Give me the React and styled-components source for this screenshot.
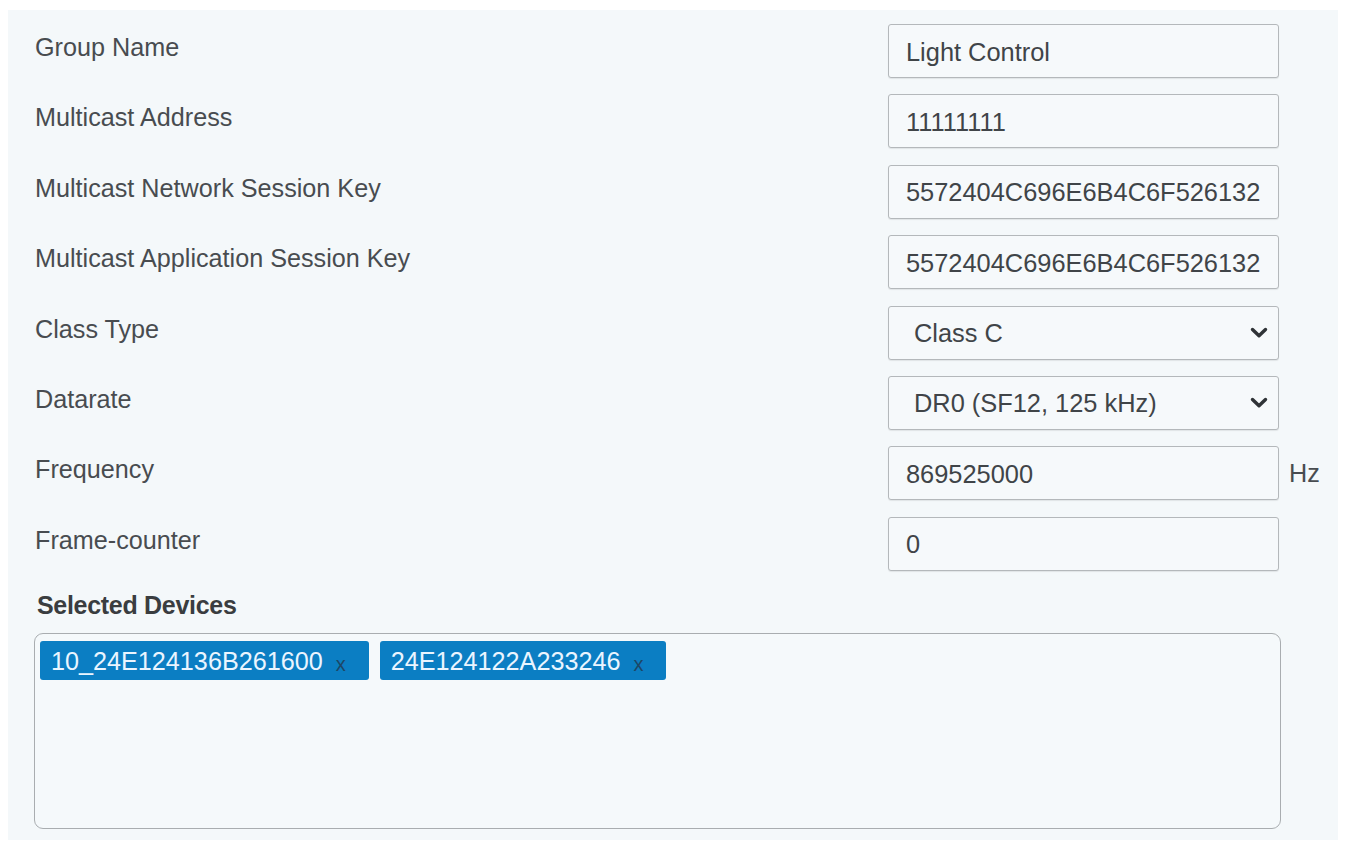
import React from "react";
import styled, { createGlobalStyle } from "styled-components";

const GlobalStyle = createGlobalStyle`
  html, body {
    margin: 0;
    padding: 0;
    background: #ffffff;
  }
  body {
    font-family: "Liberation Sans", Arial, sans-serif;
  }
  * {
    box-sizing: border-box;
  }
`;

const fields = [
  { label: "Group Name", value: "Light Control" },
  { label: "Multicast Address", value: "11111111" },
  { label: "Multicast Network Session Key", value: "5572404C696E6B4C6F526132" },
  { label: "Multicast Application Session Key", value: "5572404C696E6B4C6F526132" },
  { label: "Class Type", value: "Class C", select: true },
  { label: "Datarate", value: "DR0 (SF12, 125 kHz)", select: true },
  { label: "Frequency", value: "869525000", unit: "Hz" },
  { label: "Frame-counter", value: "0" },
];

const devices = ["10_24E124136B261600", "24E124122A233246"];

function Chevron() {
  return (
    <svg width="18" height="12" viewBox="0 0 18 12">
      <path
        d="M2.5 2.5 L9 8.8 L15.5 2.5"
        fill="none"
        stroke="#2f3337"
        strokeWidth="3.4"
        strokeLinecap="round"
        strokeLinejoin="round"
      />
    </svg>
  );
}

export default function App() {
  return (
    <>
      <GlobalStyle />
      <Page>
        <Panel>
          {fields.map((f) => (
            <Row key={f.label}>
              <Label>{f.label}</Label>
              <Control>
                {f.select ? (
                  <SelectBox>
                    <SelectText>{f.value}</SelectText>
                    <ChevronWrap>
                      <Chevron />
                    </ChevronWrap>
                  </SelectBox>
                ) : (
                  <Input defaultValue={f.value} />
                )}
                {f.unit && <Unit>{f.unit}</Unit>}
              </Control>
            </Row>
          ))}
          <DevicesTitle>Selected Devices</DevicesTitle>
          <TagBox>
            {devices.map((d) => (
              <Tag key={d}>
                {d}
                <TagRemove>x</TagRemove>
              </Tag>
            ))}
          </TagBox>
        </Panel>
      </Page>
    </>
  );
}

const Page = styled.div`
  padding: 10px 7px 7px 8px;
  width: 1345px;
  height: 847px;
`;

const Panel = styled.div`
  background: #f4f8fa;
  height: 830px;
  padding: 14px 0 0 26px;
  display: flex;
  flex-direction: column;
`;

const Row = styled.div`
  display: flex;
  align-items: flex-start;
  height: 54px;
  margin-bottom: 16.4px;
`;

const Label = styled.div`
  width: 854px;
  padding-top: 9px;
  padding-left: 1px;
  font-size: 25.2px;
  color: #484c50;
  line-height: 28px;
`;

const Control = styled.div`
  display: flex;
  align-items: center;
  height: 100%;
`;

const Input = styled.input`
  width: 391px;
  height: 54px;
  padding: 2px 0 0 17px;
  border: 1.5px solid #b4b8bb;
  border-radius: 3px;
  background: #f6f9fb;
  box-shadow: 0 1px 1px rgba(0, 0, 0, 0.08);
  font-family: "Liberation Sans", Arial, sans-serif;
  font-size: 25.4px;
  color: #404448;
  outline: none;
`;

const SelectBox = styled.div`
  position: relative;
  width: 391px;
  height: 54px;
  padding: 2px 0 0 25px;
  border: 1.5px solid #b4b8bb;
  border-radius: 3px;
  background: #f6f9fb;
  box-shadow: 0 1px 1px rgba(0, 0, 0, 0.08);
  display: flex;
  align-items: center;
`;

const SelectText = styled.span`
  font-size: 25.4px;
  color: #404448;
`;

const ChevronWrap = styled.span`
  position: absolute;
  right: 10px;
  top: 50%;
  transform: translateY(-50%);
  display: flex;
`;

const Unit = styled.span`
  margin-left: 10px;
  font-size: 25.2px;
  color: #484c50;
`;

const DevicesTitle = styled.div`
  margin-top: 4px;
  padding-left: 3px;
  font-size: 25px;
  font-weight: bold;
  color: #3a3d40;
  line-height: 28px;
  letter-spacing: -0.3px;
`;

const TagBox = styled.div`
  margin-top: 14px;
  width: 1247px;
  height: 196px;
  border: 1.5px solid #a9adb0;
  border-radius: 9px;
  background: #f5f9fb;
  padding: 7px 5px;
  display: flex;
  align-items: flex-start;
  gap: 11px;
`;

const Tag = styled.span`
  display: inline-flex;
  align-items: center;
  height: 39px;
  padding: 1px 23px 0 11px;
  background: #0b7ec3;
  border-radius: 3px;
  color: #eaf5ff;
  font-size: 25.2px;
`;

const TagRemove = styled.span`
  margin-left: 13px;
  margin-top: 6px;
  font-size: 20px;
  color: #1d4766;
`;
